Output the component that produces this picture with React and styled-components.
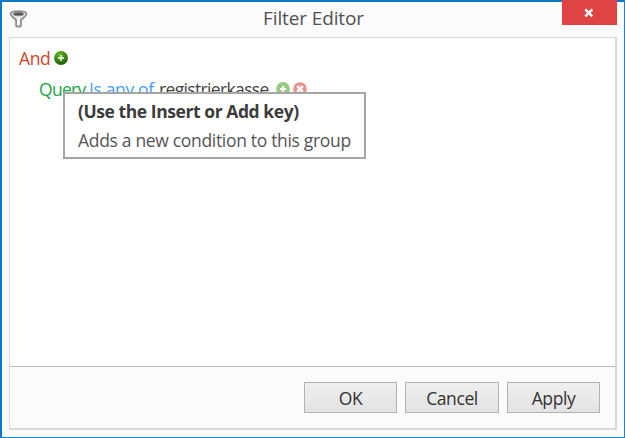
import React from 'react';
import styled, { createGlobalStyle } from 'styled-components';

const GlobalStyle = createGlobalStyle`
  * {
    box-sizing: border-box;
  }

  body {
    margin: 0;
    overflow: hidden;
    font-family: 'Open Sans', 'Noto Sans', sans-serif;
    font-size: 17.5px;
    color: #444;
  }
`;

const Window = styled.div`
  display: flex;
  flex-direction: column;
  width: 625px;
  height: 438px;
  padding: 0 7px 7px 7px;
  background: #fbfbfb;
  border: solid #1583d8;
  border-width: 2px 1px 1px 2px;
  border-top-color: #0b78cc;
  border-left-color: #0b78cc;
`;

const TitleBar = styled.header`
  display: grid;
  grid-template-columns: 55px 1fr 55px;
  height: 35px;
  flex: none;
`;

const TitleIcon = styled.svg`
  width: 19px;
  height: 19px;
  margin-top: 7px;
`;

const Title = styled.h1`
  margin: 0;
  padding-left: 1px;
  text-align: center;
  font-size: 19px;
  font-weight: 400;
  line-height: 33px;
  letter-spacing: -0.12px;
  color: #505050;
`;

const CloseButton = styled.button`
  display: flex;
  align-items: center;
  justify-content: center;
  width: 55px;
  height: 25px;
  margin: -2px 0 0;
  padding: 0 1px 0 0;
  border: none;
  background: #e04343;
`;

const Panel = styled.main`
  display: flex;
  flex-direction: column;
  flex: 1;
  border: 1px solid #d9d9d9;
  border-right-width: 2px;
  border-bottom-width: 2px;
`;

const FilterArea = styled.section`
  position: relative;
  flex: 1;
  padding-top: 8px;
  background: #fff;
`;

const FilterRow = styled.div`
  display: flex;
  align-items: center;
  height: 24px;
  margin-bottom: ${({ $gap }) => $gap || 0}px;
  padding-left: ${({ $indent }) => $indent}px;
  line-height: 24px;
  white-space: nowrap;
`;

const Token = styled.span`
  width: ${({ $width }) => $width}px;
  flex: none;
  color: ${({ $color }) => $color};
  letter-spacing: ${({ $spacing }) => $spacing || 0}px;
`;

const RoundIcon = styled.svg`
  width: 14px;
  height: 14px;
  margin-right: 3px;
  flex: none;
  opacity: ${({ $faded }) => ($faded ? 0.55 : 1)};
`;

const Tooltip = styled.div`
  position: absolute;
  left: 53px;
  top: 54px;
  width: 303px;
  height: 67px;
  padding: 4px 13px;
  border: 2px solid #a5a5a5;
  background: #fff;
  white-space: nowrap;
  color: #555;
`;

const TooltipTitle = styled.strong`
  display: block;
  height: 28px;
  line-height: 27px;
  font-weight: 700;
  letter-spacing: -0.43px;
  color: #3c3c3c;
`;

const TooltipText = styled.span`
  display: block;
  line-height: 29px;
  letter-spacing: -0.32px;
`;

const Footer = styled.footer`
  display: flex;
  justify-content: flex-end;
  gap: 8px;
  height: 62px;
  padding: 15px 15px 0 0;
  border-top: 1px solid #bcbcbc;
`;

const Button = styled.button`
  width: ${({ $width }) => $width || 93}px;
  height: 31px;
  padding: 0;
  border: 1px solid #b2b2b2;
  background: linear-gradient(#efefef, #e3e3e3);
  font: inherit;
  line-height: 28px;
  letter-spacing: -0.4px;
  color: #333;
`;

const FunnelIcon = () => (
  <TitleIcon viewBox="0 0 19 19" fill="none">
    <path
      d="M1.5 4.8C1.5 3 5 2.2 9.5 2.2s8 .8 8 2.6c0 2.2-3.2 3.5-5.6 6.3v5.8c0 1-4.8 1-4.8 0v-5.8C4.7 8.3 1.5 7 1.5 4.8z"
      fill="#e9e9e9"
      stroke="#8f8f8f"
      strokeWidth="1.8"
    />
    <ellipse cx="9.5" cy="5" rx="5.2" ry="1.7" fill="#555" stroke="#858585" />
    <path d="M9.5 9v7" stroke="#fff" strokeWidth="1.8" />
  </TitleIcon>
);

const AddIcon = ({ faded }) => (
  <RoundIcon viewBox="0 0 14 14" $faded={faded}>
    <defs>
      <radialGradient id="addFill" cx="40%" cy="25%" r="75%">
        <stop offset="0" stopColor="#65b528" />
        <stop offset="0.6" stopColor="#3b8711" />
        <stop offset="1" stopColor="#235b08" />
      </radialGradient>
    </defs>
    <circle cx="7" cy="7" r="6.9" fill={faded ? '#489f1e' : 'url(#addFill)'} />
    <path d="M7 4v6M4 7h6" stroke="#fff" strokeWidth={faded ? 2 : 1.4} />
  </RoundIcon>
);

const RemoveIcon = () => (
  <RoundIcon viewBox="0 0 14 14" $faded>
    <circle cx="7" cy="7" r="6.8" fill="#db3434" />
    <path d="M4.2 4.2l5.6 5.6M9.8 4.2l-5.6 5.6" stroke="#fff" strokeWidth="2.6" />
  </RoundIcon>
);

const CloseIcon = () => (
  <svg width="10" height="10" viewBox="0 0 10 10">
    <path d="M1.3 1.3l7 7M8.3 1.3l-7 7" stroke="#fff" strokeWidth="2.5" />
  </svg>
);

const App = () => (
  <>
    <GlobalStyle />
    <Window>
      <TitleBar>
        <FunnelIcon />
        <Title>Filter Editor</Title>
        <CloseButton aria-label="Close">
          <CloseIcon />
        </CloseButton>
      </TitleBar>
      <Panel>
        <FilterArea>
          <FilterRow $indent={9} $gap={7}>
            <Token $width={35} $color="#d2451e" $spacing={-0.4}>And</Token>
            <AddIcon />
          </FilterRow>
          <FilterRow $indent={29}>
            <Token $width={50} $color="#22a447" $spacing={-0.7}>Query</Token>
            <Token $width={70} $color="#4a9ff5" $spacing={-0.35}>Is any of</Token>
            <Token $width={117} $color="#444" $spacing={-0.65}>registrierkasse</Token>
            <AddIcon faded />
            <RemoveIcon />
          </FilterRow>
          <Tooltip role="tooltip">
            <TooltipTitle>(Use the Insert or Add key)</TooltipTitle>
            <TooltipText>Adds a new condition to this group</TooltipText>
          </Tooltip>
        </FilterArea>
        <Footer>
          <Button>OK</Button>
          <Button $width={94}>Cancel</Button>
          <Button>Apply</Button>
        </Footer>
      </Panel>
    </Window>
  </>
);

export default App;
